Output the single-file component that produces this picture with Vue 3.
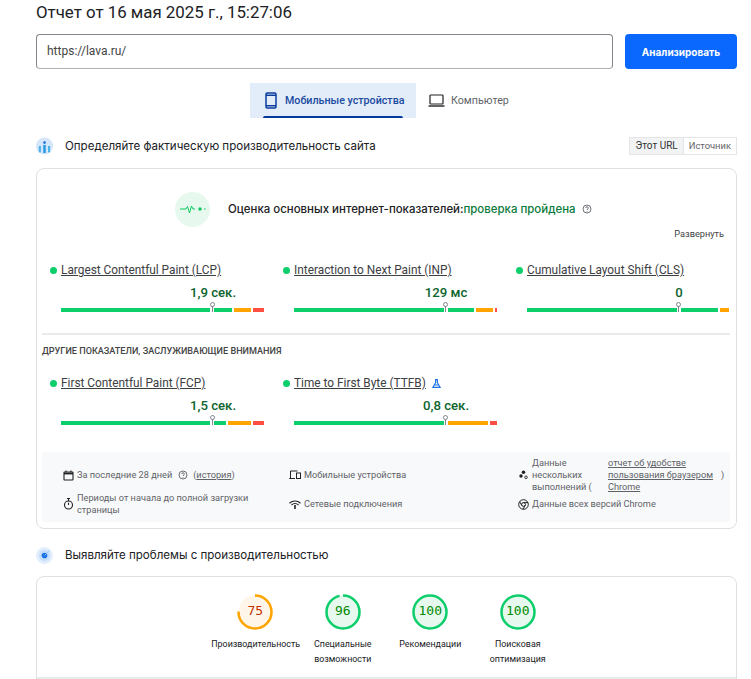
<script setup>
const G = '#0cce6b', O = '#ffa400', R = '#ff4e42'
const core = [
  { name: 'Largest Contentful Paint (LCP)', value: '1,9 сек.', segs: [[G, 149], [G, 18], [O, 17], [R, 11]] },
  { name: 'Interaction to Next Paint (INP)', value: '129 мс', segs: [[G, 150], [G, 26], [O, 17], [R, 2]] },
  { name: 'Cumulative Layout Shift (CLS)', value: '0', segs: [[G, 150], [G, 37], [O, 9]] }
]
const other = [
  { name: 'First Contentful Paint (FCP)', value: '1,5 сек.', segs: [[G, 149], [G, 12], [O, 23], [R, 11]] },
  { name: 'Time to First Byte (TTFB)', value: '0,8 сек.', flask: true, segs: [[G, 150], [O, 40], [R, 7]] }
]
const C = 2 * Math.PI * 16.5
const gauges = [
  { score: 75, color: O, fill: '#fff5e8', text: '#c33300', label: 'Производительность' },
  { score: 96, color: G, fill: '#e7f9ef', text: '#008800', label: 'Специальные возможности' },
  { score: 100, color: G, fill: '#e7f9ef', text: '#008800', label: 'Рекомендации' },
  { score: 100, color: G, fill: '#e7f9ef', text: '#008800', label: 'Поисковая оптимизация' }
]
</script>

<template>
  <div class="page">
    <h1 class="title">Отчет от 16 мая 2025 г., 15:27:06</h1>
    <div class="search">
      <div class="url">https://lava.ru/</div>
      <button class="go">Анализировать</button>
    </div>

    <div class="tabs">
      <div class="tab active">
        <svg width="12" height="17" viewBox="0 0 12 17" fill="none" stroke="#0b3d9c" stroke-width="1.5"><rect x="1" y="1" width="10" height="15" rx="1.2" /><path d="M1 3.2h10M1 13.8h10" /></svg>
        <span>Мобильные устройства</span>
      </div>
      <div class="tab">
        <svg width="17" height="13" viewBox="0 0 17 13" fill="none" stroke="#202124" stroke-width="1.2"><rect x="2" y="1" width="13" height="9" rx=".8" /><path d="M.5 12h16" stroke-width="1.4" /></svg>
        <span>Компьютер</span>
      </div>
    </div>

    <div class="section-head">
      <svg class="sec-icon" width="17" height="18" viewBox="0 0 16 16">
        <circle cx="8" cy="8" r="8" fill="#d5e6fb" />
        <rect x="2.6" y="8" width="2" height="6" fill="#4db2ea" />
        <rect x="6.8" y="7" width="2.4" height="7.6" fill="#2a9be4" />
        <rect x="11.3" y="8" width="2" height="6" fill="#4db2ea" />
        <circle cx="8" cy="4.8" r="1.2" fill="#1a66d6" />
      </svg>
      <h2>Определяйте фактическую производительность сайта</h2>
      <div class="toggle">
        <span class="on">Этот URL</span>
        <span class="off">Источник</span>
      </div>
    </div>

    <section class="card vitals">
      <div class="verdict">
        <div class="pulse">
          <svg width="26" height="10" viewBox="0 0 26 10" fill="none" stroke="#0cc95f" stroke-width="1"><path d="M0 5h6l1.5-2.5L9.5 9l2-7 1.5 3h2" /><circle cx="20" cy="5" r="1.7" fill="#0cc95f" stroke="none" /><path d="M24 5h1.5" /></svg>
        </div>
        <span class="verdict-text">Оценка основных интернет-показателей:</span>
        <span class="passed">проверка пройдена</span>
        <svg class="help" width="10" height="10" viewBox="0 0 10 10" fill="none" stroke="#5f6368" stroke-width=".9"><circle cx="5" cy="5" r="4" /><path d="M3.7 4c0-1.7 2.7-1.7 2.7 0 0 1-1.4 1-1.4 2M5 7v.7" /></svg>
      </div>
      <div class="expand">Развернуть</div>

      <div class="metrics">
        <div v-for="m in core" :key="m.name" class="metric">
          <div class="m-name"><i class="dot"></i><a>{{ m.name }}</a></div>
          <div class="m-val"><b>{{ m.value }}</b></div>
          <div class="bar">
            <i v-for="(s, i) in m.segs" :key="i" :style="{ background: s[0], width: s[1] + 'px' }"></i>
            <em class="pin"></em>
          </div>
        </div>
      </div>

      <hr class="rule" />
      <div class="caps">Другие показатели, заслуживающие внимания</div>

      <div class="metrics second">
        <div v-for="m in other" :key="m.name" class="metric">
          <div class="m-name">
            <i class="dot"></i><a>{{ m.name }}</a>
            <svg v-if="m.flask" class="flask" width="9" height="9" viewBox="0 0 9 9" fill="none" stroke="#1a73e8" stroke-width="1.2"><path d="M3 .7h3M3.6.7v3L1 8.3h7L5.4 3.700V.7M2.500 6h4" /></svg>
          </div>
          <div class="m-val"><b>{{ m.value }}</b></div>
          <div class="bar">
            <i v-for="(s, i) in m.segs" :key="i" :style="{ background: s[0], width: s[1] + 'px' }"></i>
            <em class="pin"></em>
          </div>
        </div>
      </div>

      <div class="foot">
        <div class="f-item">
          <svg width="11" height="11" viewBox="0 0 11 11" fill="none" stroke="#202124" stroke-width="1.1"><rect x="1" y="2" width="9" height="8" rx=".6" /><path d="M1 3.500h9" stroke-width="1.800" /><path d="M3 .5v1.500M8 .5v1.500" /></svg>
          <span>За последние 28 дней</span>
          <svg class="f-help" width="10" height="10" viewBox="0 0 10 10" fill="none" stroke="#5f6368" stroke-width=".9"><circle cx="5" cy="5" r="4" /><path d="M3.7 4c0-1.7 2.700-1.700 2.700 0 0 1-1.400 1-1.400 2M5 7v.7" /></svg>
          <span class="f-link">(<a>история</a>)</span>
        </div>
        <div class="f-item">
          <svg width="12" height="10" viewBox="0 0 12 10" fill="none" stroke="#202124" stroke-width="1"><path d="M1.500 8V1h7M.2 8.500h5.800" /><rect x="7.500" y="3" width="4" height="5.500" /></svg>
          <span>Мобильные устройства</span>
        </div>
        <div class="f-item c3">
          <svg width="10" height="10" viewBox="0 0 10 10" fill="#202124"><circle cx="3" cy="6" r="1.700" /><circle cx="5.500" cy="2.200" r="1.800" /><circle cx="8" cy="7.300" r="1.300" fill="none" stroke="#202124" stroke-width=".9" /></svg>
          <div class="runs">
            <span class="runs-a">Данные нескольких выполнений (</span>
            <a class="runs-b">отчет об удобстве пользования браузером Chrome</a>
            <span class="runs-c">)</span>
          </div>
        </div>
        <div class="f-item">
          <svg width="11" height="12" viewBox="0 0 11 12" fill="none" stroke="#202124" stroke-width="1.100"><circle cx="5.500" cy="7" r="4" /><path d="M4 .5h3M5.500.5v2.500M5.500 7V4.800" /></svg>
          <span class="wrap">Периоды от начала до полной загрузки страницы</span>
        </div>
        <div class="f-item">
          <svg width="12" height="9" viewBox="0 0 12 9" fill="none" stroke="#202124"><path d="M.5 3.200a8 8 0 0 1 11 0" stroke-width="1.200" /><path d="M2.500 5a5 5 0 0 1 7 0" stroke-width="1.100" /><path d="M6 5v4" stroke-width="1.600" /></svg>
          <span>Сетевые подключения</span>
        </div>
        <div class="f-item">
          <svg width="11" height="11" viewBox="0 0 11 11" fill="none" stroke="#202124" stroke-width="1"><circle cx="5.500" cy="5.500" r="4.800" /><circle cx="5.500" cy="5.500" r="1.900" /><path d="M5.500 3.600h4.500M3.800 6.400 1.600 2.600M7.200 6.400 5 10.200" /></svg>
          <span>Данные всех версий Chrome</span>
        </div>
      </div>
    </section>

    <div class="section-head two">
      <svg class="sec-icon" width="17" height="17" viewBox="0 0 18 18">
        <circle cx="9" cy="9" r="9" fill="#e3eefc" />
        <circle cx="9" cy="9" r="6" fill="#c7dffa" />
        <circle cx="9" cy="9" r="3" fill="#1a73e8" />
        <path d="M9 9l5-5" stroke="#8fc1f5" stroke-width="1" />
      </svg>
      <h2>Выявляйте проблемы с производительностью</h2>
    </div>

    <section class="card scores">
      <div class="gauges">
        <div v-for="g in gauges" :key="g.label" class="gauge">
          <div class="ring">
            <svg width="36" height="36" viewBox="0 0 36 36">
              <circle cx="18" cy="18" r="16.500" :fill="g.fill" />
              <circle
                cx="18" cy="18" r="16.500" fill="none" :stroke="g.color" stroke-width="2.500"
                :stroke-dasharray="(g.score / 100) * C + ' ' + C" transform="rotate(-90 18 18)"
              />
            </svg>
            <span :style="{ color: g.text }">{{ g.score }}</span>
          </div>
          <div class="g-label">{{ g.label }}</div>
        </div>
      </div>
      <hr class="rule end" />
    </section>
  </div>
</template>

<style>
html, body { margin: 0; height: 100%; overflow: hidden; background: #fff; }
</style>

<style scoped>
.page { width: 701px; margin-left: 36px; font-family: Roboto, "Liberation Sans", sans-serif; color: #202124; }
.title { margin: 0; height: 24px; font: 400 16.850px/24px Roboto, sans-serif; color: #202124; }
.search { display: flex; gap: 12px; margin-top: 10px; height: 35px; }
.url { flex: 1; border: 1px solid #80868b; border-bottom-color: #aeb1b5; border-radius: 4px; padding: 0 10px; font-size: 12px; line-height: 33px; color: #444; }
.go { width: 112px; border: 0; border-radius: 4px; background: #0b68ff; color: #fff; font: 700 10px Inter, Roboto, sans-serif; }
.tabs { display: flex; margin: 14px 0 0 214px; height: 35px; }
.tab { display: flex; align-items: center; gap: 6px; padding: 0 12px; font-size: 10.700px; color: #5f6368; white-space: nowrap; position: relative; }
.tab svg { flex: none; }
.tab.active { gap: 8px; width: 166px; box-sizing: border-box; background: #e3edfa; color: #1a4a9e; font-weight: 500; padding: 0 15px; }
.tab.active::after { content: ""; position: absolute; left: 13px; right: 13px; bottom: 0; height: 2px; background: #003a9b; border-radius: 2px 2px 0 0; }
.section-head { display: flex; align-items: center; height: 18px; margin-top: 19px; }
.section-head h2 { margin: 0; font: 400 11.550px/18px Inter, Roboto, sans-serif; color: #202124; }
.sec-icon { flex: none; margin-right: 12px; }
.section-head.two { margin-top: 17px; }
.toggle { margin-left: auto; display: flex; border: 1px solid #e3e5e7; font-size: 10px; line-height: 16px; color: #5f6368; }
.toggle span { padding: 0 5px; }
.toggle .on { background: #f1f3f4; color: #333; border-right: 1px solid #e3e5e7; }
.toggle .off { font-size: 9.400px; }
.card { box-sizing: border-box; border: 1px solid #e0e0e0; border-radius: 8px; margin-top: 13px; }
.vitals { height: 361px; padding: 22px 6px 5px 5px; }
.verdict { display: flex; align-items: center; margin-left: 133px; height: 36px; font: 500 11.450px Inter, Roboto, sans-serif; }
.pulse { width: 35px; height: 35px; border-radius: 50%; background: #e7f9ef; display: flex; align-items: center; justify-content: center; margin-right: 18px; }
.passed { color: #0a7a3a; }
.help { margin-left: 6px; }
.expand { text-align: right; font-size: 9.200px; color: #444; margin: 1px 6px 0 0; line-height: 12px; }
.metrics { display: grid; grid-template-columns: repeat(3, 214px); column-gap: 19px; margin: 22px 0 0 8px; }
.metrics.second { margin-top: 17px; }
.m-name { display: flex; align-items: center; height: 16px; font-size: 11.850px; color: #3c4043; white-space: nowrap; }
.m-name a { text-decoration: underline; text-underline-offset: 1px; }
.dot { width: 7px; height: 7px; border-radius: 50%; background: #0cce6b; margin-right: 4px; flex: none; }
.flask { margin-left: 6px; }
.m-val { margin: 7px 0 0 163px; width: 0; height: 16px; display: flex; justify-content: center; white-space: nowrap; }
.m-val b { font-size: 13.200px; line-height: 16px; font-weight: 500; color: #0d652d; }
.bar { position: relative; display: flex; gap: 2px; margin: 7px 0 0 11px; height: 4px; width: 203px; }
.bar i { height: 4px; flex: none; }
.bar i:first-child { margin-right: 2px; }
.pin { position: absolute; left: 150px; top: -6px; width: 3px; height: 10px; }
.pin::before { content: ""; position: absolute; left: -1px; top: 0; width: 5px; height: 5px; box-sizing: border-box; border: 1px solid #80868b; border-radius: 50%; background: #fff; }
.pin::after { content: ""; position: absolute; left: 1px; top: 4px; width: 1px; height: 6px; background: #80868b; }
.rule { border: 0; height: 2px; background: #ebebeb; margin: 21px 0 0; }
.caps { margin-top: 10px; font-size: 9.100px; line-height: 13px; font-weight: 500; text-transform: uppercase; color: #444; }
.foot { margin-top: 27px; background: #f8f9fa; height: 70px; box-sizing: border-box; display: grid; grid-template-columns: 226px 229px 1fr; grid-template-rows: 36px 22px; padding: 5px 0 0 21px; border-radius: 2px; font-size: 9.200px; line-height: 12px; color: #5f6368; }
.f-item { display: flex; align-items: center; gap: 3px; }
.f-item.c3 { gap: 4px; }
.f-item > svg { flex: none; }
.f-help { margin: 0 2px 0 3px; }
.f-item a, .f-link a { text-decoration: underline; }
.wrap { width: 190px; }
.runs { display: flex; align-items: center; line-height: 12px; }
.runs-a { width: 76px; flex: none; }
.runs-b { width: 113px; flex: none; }
.scores { height: 180px; padding: 17px 0 0; margin-top: 12px; }
.gauges { display: grid; grid-template-columns: repeat(4, 87.500px); justify-content: center; }
.gauge { display: flex; flex-direction: column; align-items: center; }
.ring { position: relative; width: 36px; height: 36px; }
.ring svg { display: block; }
.ring span { position: absolute; inset: -1px 0 0; text-align: center; font: 13px/36px "DejaVu Sans Mono", monospace; }
.g-label { width: 88px; margin-top: 7px; text-align: center; font: 8.900px/15px Roboto, sans-serif; color: #202124; }
.rule.end { margin-top: 10px; }
</style>
